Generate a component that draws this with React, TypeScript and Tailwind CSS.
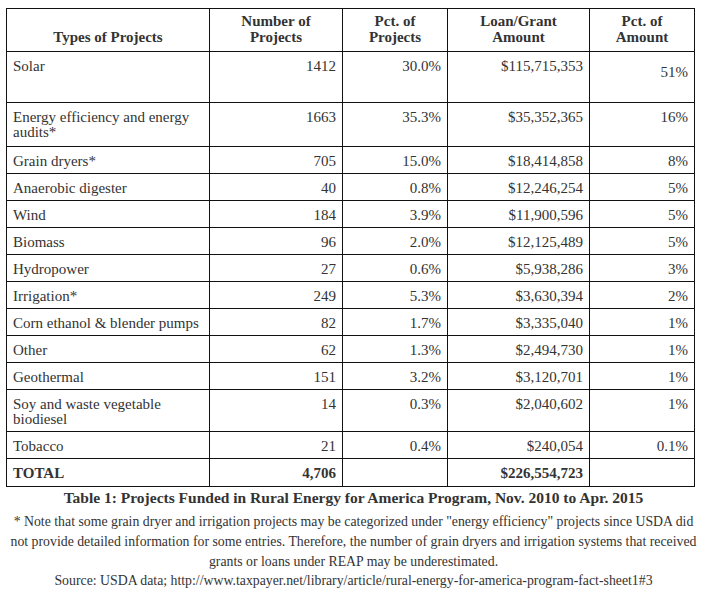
import React from "react";

type Row = {
  name: string;
  count: string;
  pct: string;
  amount: string;
  share: string;
  h: string;
};

const rows: Row[] = [
  { name: "Solar", count: "1412", pct: "30.0%", amount: "$115,715,353", share: "51%", h: "h-[51px]" },
  { name: "Energy efficiency and energy audits*", count: "1663", pct: "35.3%", amount: "$35,352,365", share: "16%", h: "h-[44px]" },
  { name: "Grain dryers*", count: "705", pct: "15.0%", amount: "$18,414,858", share: "8%", h: "h-[27px]" },
  { name: "Anaerobic digester", count: "40", pct: "0.8%", amount: "$12,246,254", share: "5%", h: "h-[27px]" },
  { name: "Wind", count: "184", pct: "3.9%", amount: "$11,900,596", share: "5%", h: "h-[27px]" },
  { name: "Biomass", count: "96", pct: "2.0%", amount: "$12,125,489", share: "5%", h: "h-[27px]" },
  { name: "Hydropower", count: "27", pct: "0.6%", amount: "$5,938,286", share: "3%", h: "h-[27px]" },
  { name: "Irrigation*", count: "249", pct: "5.3%", amount: "$3,630,394", share: "2%", h: "h-[27px]" },
  { name: "Corn ethanol & blender pumps", count: "82", pct: "1.7%", amount: "$3,335,040", share: "1%", h: "h-[27px]" },
  { name: "Other", count: "62", pct: "1.3%", amount: "$2,494,730", share: "1%", h: "h-[27px]" },
  { name: "Geothermal", count: "151", pct: "3.2%", amount: "$3,120,701", share: "1%", h: "h-[27px]" },
  { name: "Soy and waste vegetable biodiesel", count: "14", pct: "0.3%", amount: "$2,040,602", share: "1%", h: "h-[42px]" },
  { name: "Tobacco", count: "21", pct: "0.4%", amount: "$240,054", share: "0.1%", h: "h-[27px]" },
];

const cell = "border border-[#111] align-top px-[6px] pb-0 leading-[15px]";

export default function App() {
  return (
    <div className="w-[707px] h-[604px] bg-white text-[#333] font-['Liberation_Serif',serif] text-[15px]">
      <div className="pt-[8px] pl-[6px]">
        <table className="border-collapse w-[688px] table-fixed">
          <colgroup>
            <col className="w-[203px]" />
            <col className="w-[133px]" />
            <col className="w-[105px]" />
            <col className="w-[142px]" />
            <col className="w-[105px]" />
          </colgroup>
          <thead>
            <tr className="h-[43px] font-bold">
              <th className="border border-[#111] align-bottom text-center px-[6px] pb-[6px] leading-[16px]">Types of Projects</th>
              <th className="border border-[#111] align-bottom text-center px-[6px] pb-[6px] leading-[16px]">Number of<br />Projects</th>
              <th className="border border-[#111] align-bottom text-center px-[6px] pb-[6px] leading-[16px]">Pct. of<br />Projects</th>
              <th className="border border-[#111] align-bottom text-center px-[6px] pb-[6px] leading-[16px]">Loan/Grant<br />Amount</th>
              <th className="border border-[#111] align-bottom text-center px-[6px] pb-[6px] leading-[16px]">Pct. of<br />Amount</th>
            </tr>
          </thead>
          <tbody>
            {rows.map((r, i) => (
              <tr key={r.name} className={r.h}>
                <td className={`${cell} pt-[7px]`}>{r.name}</td>
                <td className={`${cell} pt-[7px] text-right`}>{r.count}</td>
                <td className={`${cell} pt-[7px] text-right`}>{r.pct}</td>
                <td className={`${cell} pt-[7px] text-right`}>{r.amount}</td>
                <td className={`${cell} text-right ${i === 0 ? "pt-[13px]" : "pt-[7px]"}`}>{r.share}</td>
              </tr>
            ))}
            <tr className="h-[28px] font-bold">
              <td className={`${cell} pt-[7px]`}>TOTAL</td>
              <td className={`${cell} pt-[7px] text-right`}>4,706</td>
              <td className={cell}></td>
              <td className={`${cell} pt-[7px] text-right`}>$226,554,723</td>
              <td className={cell}></td>
            </tr>
          </tbody>
        </table>
      </div>
      <p className="text-center font-bold text-[15.5px] leading-[20px] mt-[1px]">
        Table 1: Projects Funded in Rural Energy for America Program, Nov. 2010 to Apr. 2015
      </p>
      <div className="text-center text-[13.8px] leading-[20px] mt-[4px] whitespace-nowrap">
        <div>* Note that some grain dryer and irrigation projects may be categorized under "energy efficiency" projects since USDA did</div>
        <div>not provide detailed information for some entries. Therefore, the number of grain dryers and irrigation systems that received</div>
        <div>grants or loans under REAP may be underestimated.</div>
        <div className="leading-[18px]">Source: USDA data; http://www.taxpayer.net/library/article/rural-energy-for-america-program-fact-sheet1#3</div>
      </div>
    </div>
  );
}
